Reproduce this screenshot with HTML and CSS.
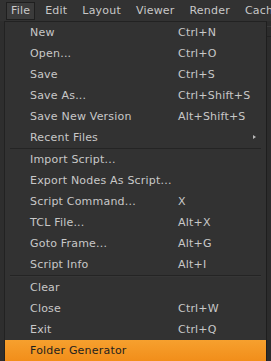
FILE: index.html
```html
<!DOCTYPE html>
<html>
<head>
<meta charset="utf-8">
<link rel="stylesheet" href="styles.css">
</head>
<body>
<div class="app">
  <div class="menubar">
    <span class="mb-item active">File</span>
    <span class="mb-item">Edit</span>
    <span class="mb-item">Layout</span>
    <span class="mb-item">Viewer</span>
    <span class="mb-item">Render</span>
    <span class="mb-item">Cache</span>
  </div>
  <div class="below">
    <div class="left-strip"></div>
    <div class="menu">
      <div class="row"><span class="label">New</span><span class="key">Ctrl+N</span></div>
      <div class="row"><span class="label">Open...</span><span class="key">Ctrl+O</span></div>
      <div class="row"><span class="label">Save</span><span class="key">Ctrl+S</span></div>
      <div class="row"><span class="label">Save As...</span><span class="key">Ctrl+Shift+S</span></div>
      <div class="row"><span class="label">Save New Version</span><span class="key">Alt+Shift+S</span></div>
      <div class="row"><span class="label">Recent Files</span><span class="key"></span><span class="arrow"></span></div>
      <div class="sep sep1"></div>
      <div class="row"><span class="label">Import Script...</span><span class="key"></span></div>
      <div class="row"><span class="label">Export Nodes As Script...</span><span class="key"></span></div>
      <div class="row"><span class="label">Script Command...</span><span class="key">X</span></div>
      <div class="row"><span class="label">TCL File...</span><span class="key">Alt+X</span></div>
      <div class="row"><span class="label">Goto Frame...</span><span class="key">Alt+G</span></div>
      <div class="row"><span class="label">Script Info</span><span class="key">Alt+I</span></div>
      <div class="sep sep2"></div>
      <div class="row"><span class="label">Clear</span><span class="key"></span></div>
      <div class="row"><span class="label">Close</span><span class="key">Ctrl+W</span></div>
      <div class="row"><span class="label">Exit</span><span class="key">Ctrl+Q</span></div>
      <div class="row hl"><span class="label">Folder Generator</span><span class="key"></span></div>
    </div>
    <div class="right-strip">
      <div class="rs-line a"></div>
      <div class="rs-line b"></div>
    </div>
  </div>
</div>
</body>
</html>
```

FILE: styles.css
```css
html, body {
  margin: 0;
  padding: 0;
  background: #2b2b2b;
  overflow: hidden;
}
.app {
  width: 271px;
  height: 361px;
  display: flex;
  flex-direction: column;
  font-family: "DejaVu Sans", Verdana, sans-serif;
  font-size: 11px;
  letter-spacing: 0.2px;
  color: #c8c8c8;
  overflow: hidden;
}
.menubar {
  height: 21px;
  flex: none;
  background: #323232;
  display: flex;
  align-items: center;
  padding-left: 3.5px;
  box-sizing: border-box;
  white-space: nowrap;
}
.mb-item {
  margin: 0 2.5px;
  padding: 1px 4px 1px 4px;
  line-height: 14px;
  border: 1px solid transparent;
}
.mb-item.active {
  background: #3b3b3b;
  border-color: #1f1f1f;
}
.below {
  flex: 1;
  display: flex;
  min-height: 0;
}
.left-strip {
  width: 4px;
  flex: none;
  background: #2e2e2e;
  border-right: 1px solid #222;
}
.menu {
  width: 261px;
  flex: none;
  background: #323232;
  border-top: 1px solid #222;
  border-right: 1px solid #1e1e1e;
  display: flex;
  flex-direction: column;
}
.row {
  height: 21px;
  flex: none;
  display: grid;
  grid-template-columns: 148px 1fr;
  padding-left: 25px;
  align-items: center;
  position: relative;
  white-space: nowrap;
}
.row.hl {
  background: linear-gradient(#f6a02e, #f28e1a);
  color: #1e1e1e;
}
.arrow {
  position: absolute;
  right: 10px;
  top: 8px;
  width: 0;
  height: 0;
  border-top: 2.5px solid transparent;
  border-bottom: 2.5px solid transparent;
  border-left: 3px solid #b8b8b8;
}
.sep {
  flex: none;
  margin: 0 5px 0 5px;
  border-top: 1px solid #242424;
}
.sep2 {
  border-bottom: 1px solid #363636;
}
.right-strip {
  flex: 1;
  background: #2c2c2c;
  display: flex;
  flex-direction: column;
}
.rs-line {
  border-top: 1px solid #3a3a3a;
}
.rs-line.a { margin-top: 5px; }
.rs-line.b { margin-top: 9px; border-top-color: #222; }
```
